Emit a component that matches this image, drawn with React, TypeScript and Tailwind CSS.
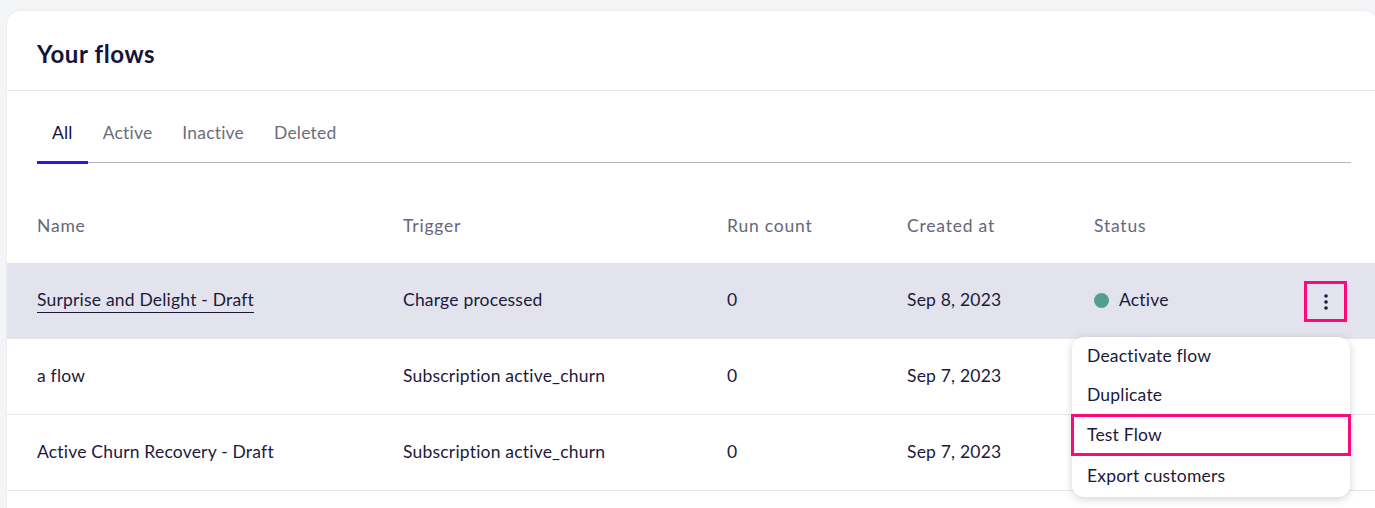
import React from "react";

const font = { fontFamily: "Lato, 'Noto Sans', sans-serif" };

const rows = [
  { name: "Surprise and Delight - Draft", trigger: "Charge processed", count: "0", created: "Sep 8, 2023", status: "Active", highlight: true },
  { name: "a flow", trigger: "Subscription active_churn", count: "0", created: "Sep 7, 2023", status: "", highlight: false },
  { name: "Active Churn Recovery - Draft", trigger: "Subscription active_churn", count: "0", created: "Sep 7, 2023", status: "", highlight: false },
];

const cols = "grid grid-cols-[366px_324px_180px_187px_1fr] pl-[30px] items-center";

export default function App() {
  return (
    <div className="w-[1375px] h-[508px] overflow-hidden bg-[#f4f5f7] pt-[11px] pl-[7px] relative" style={font}>
      <div className="w-[1371px] h-[600px] bg-white rounded-t-[14px] shadow-[0_0_3px_rgba(0,0,0,0.08)]">
        <div className="h-[80px] flex items-center pl-[30px] pt-[6px] border-b border-[#e6e7ea]">
          <h1 className="text-[24px] font-bold text-[#14143a] tracking-[0.6px]">Your flows</h1>
        </div>
        <div className="ml-[30px] mr-[27px] mt-[14px] flex border-b-[1.5px] border-[#b3b9c1]">
          {["All", "Active", "Inactive", "Deleted"].map((t, i) => (
            <div
              key={t}
              className={
                "h-[59px] -mb-[2px] px-[15px] flex items-center text-[17.5px] tracking-[0.2px] border-b-[3px] " +
                (i === 0 ? "border-[#3a10e5] text-[#14143a]" : "border-transparent text-[#6b6e7a]")
              }
            >
              {t}
            </div>
          ))}
        </div>
        <div className="mt-[27px]">
          <div className={cols + " h-[73px] text-[17.5px] text-[#65677a] tracking-[0.8px]"}>
            <div>Name</div>
            <div>Trigger</div>
            <div>Run count</div>
            <div>Created at</div>
            <div>Status</div>
          </div>
          {rows.map((r, i) => (
            <div
              key={i}
              className={
                cols +
                " h-[76px] text-[17.5px] tracking-[0.2px] text-[#1b1a3d] border-b border-[#e6e7eb] relative " +
                (r.highlight ? "bg-[#e3e3ed]" : "bg-white")
              }
            >
              <div>
                <span className={r.highlight ? "underline underline-offset-[6px] decoration-[1px] decoration-[#1b1a3d]" : ""}>
                  {r.name}
                </span>
              </div>
              <div>{r.trigger}</div>
              <div>{r.count}</div>
              <div>{r.created}</div>
              <div className="flex items-center">
                {r.status && (
                  <>
                    <span className="w-[15px] h-[15px] rounded-full bg-[#529e90] mr-[10px]" />
                    <span>{r.status}</span>
                  </>
                )}
              </div>
              {r.highlight && (
                <div className="absolute left-[1297px] top-[18px] w-[43px] h-[41px] border-[3px] border-[#fb0a7c] flex items-center justify-center">
                  <svg width="6" height="20" viewBox="0 0 6 20">
                    <circle cx="3" cy="4" r="1.8" fill="#1b1a3d" />
                    <circle cx="3" cy="10" r="1.8" fill="#1b1a3d" />
                    <circle cx="3" cy="16" r="1.8" fill="#1b1a3d" />
                  </svg>
                </div>
              )}
            </div>
          ))}
        </div>
      </div>

      <div className="absolute left-[1072px] top-[337px] w-[278px] h-[160px] bg-white rounded-[12px] shadow-[0_2px_8px_rgba(0,0,0,0.18)] text-[17.5px] tracking-[0.2px] text-[#1b1a3d]">
        <div className="h-[39px] flex items-center pl-[15px]">Deactivate flow</div>
        <div className="h-[38px] flex items-center pl-[15px]">Duplicate</div>
        <div className="h-[42px] -mx-[1px] flex items-center pl-[13px] border-[3px] border-[#fb0a7c]">Test Flow</div>
        <div className="h-[41px] flex items-center pl-[15px]">Export customers</div>
      </div>
    </div>
  );
}
